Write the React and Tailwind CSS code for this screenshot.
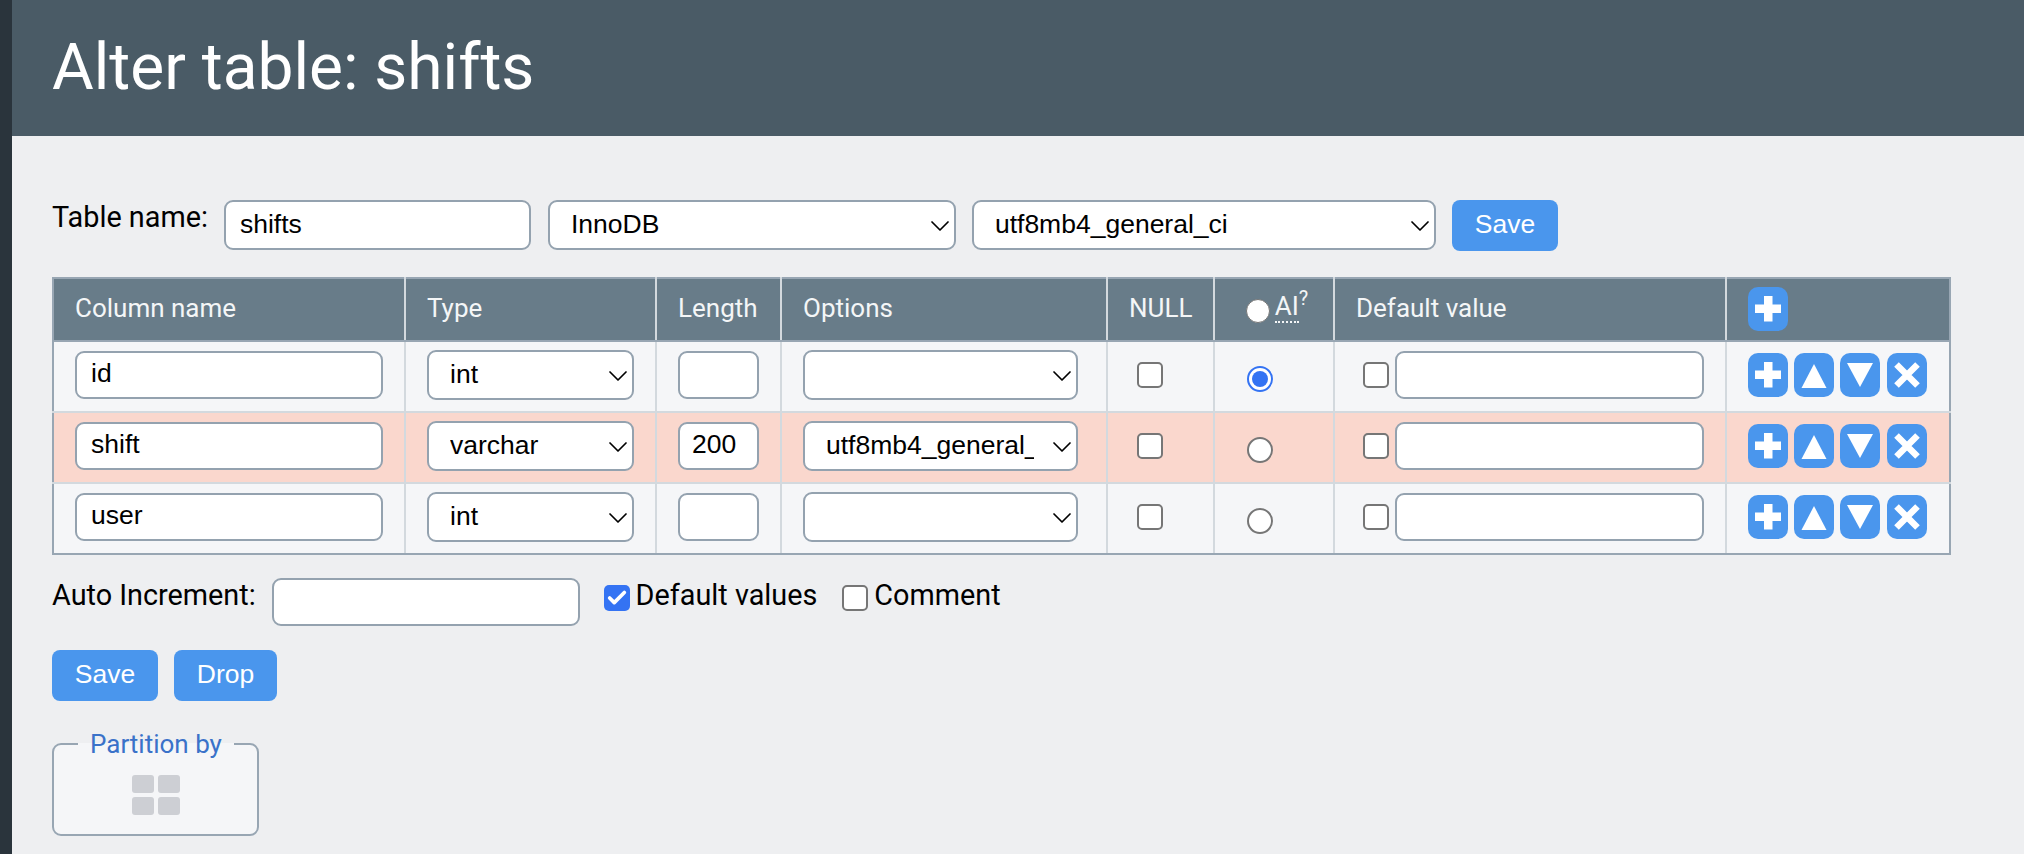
import { Check, ChevronDown } from 'lucide-react';

const rows = [
  { name: 'id', type: 'int', length: '', option: '', ai: true, bg: 'bg-[#f5f6f8]', h: 'h-[71px]' },
  { name: 'shift', type: 'varchar', length: '200', option: 'utf8mb4_general_ci', ai: false, bg: 'bg-[#fad7cd]', h: 'h-[71px]' },
  { name: 'user', type: 'int', length: '', option: '', ai: false, bg: 'bg-[#f5f6f8]', h: 'h-[71px]' },
];

const control = "h-[48px] rounded-[9px] border-2 border-[#94a2af] bg-white text-[26.5px] text-black outline-none font-['Liberation_Sans',sans-serif]";
const thClass = "h-[63px] border-2 border-[#98a6b3] border-x-[#d3d9de] bg-[#687c89] px-[21px] pb-[2px] text-left text-[26px] font-normal text-[#f4f6f7] first:border-l-[#98a6b3] last:border-r-[#98a6b3]";
const tdClass = "border-2 border-y-[#d3d9de] border-x-[#d3d9de] p-0 pb-[4px] pl-[21px] first:border-l-[#98a6b3] last:border-r-[#98a6b3]";
const checkboxClass = "block h-[26px] w-[26px] appearance-none rounded-[5px] border-2 border-[#767676] bg-white";
const radioClass = "block h-[26px] w-[26px] appearance-none rounded-full border-2 border-[#767676] bg-white";
const buttonClass = "h-[51px] rounded-[8px] bg-[#4a96ed] pb-[2px] text-[26.5px] text-white font-['Liberation_Sans',sans-serif]";
const labelClass = "text-[28.8px]";

function Select({ value, options, className }) {
  return (
    <div className={`relative shrink-0 ${className}`}>
      <select defaultValue={value} className={`${control} h-[50px] w-full appearance-none pl-[21px] pr-[42px]`}>
        {options.map((o) => <option key={o} value={o}>{o}</option>)}
      </select>
      <ChevronDown size={32} strokeWidth={1.3} className="pointer-events-none absolute right-0 top-[10px] text-black" />
    </div>
  );
}

function IconButton({ children, className = '' }) {
  return (
    <button className={`flex h-[44px] w-[40px] items-center justify-center rounded-[10px] bg-[#4a96ed] ${className}`}>
      <svg width="28" height="28" viewBox="0 0 28 28" fill="white">{children}</svg>
    </button>
  );
}

const Plus = () => <IconButton><path d="M10 1h8.500v8.500H27v8.500h-8.500V26.500H10V18H1V9.500h9z" /></IconButton>;
const Up = () => <IconButton><path d="M14 3 26.500 27H1.500z" /></IconButton>;
const Down = () => <IconButton><path d="M1 2h26L14 26z" /></IconButton>;
const Remove = () => <IconButton className="ml-[1px]"><path d="M3.500 3.500 24.500 24.500M24.500 3.500 3.500 24.500" stroke="white" strokeWidth="6.500" fill="none" /></IconButton>;

export default function App() {
  return (
    <div className="flex min-h-screen bg-[#eeeff1] font-['Roboto',sans-serif] text-black">
      <div className="w-[12px] shrink-0 bg-[#2a343c]" />
      <div className="min-w-0 flex-1">
        <h1 className="flex h-[136px] items-center bg-[#4a5b66] pl-[40px] text-[64px] font-normal text-white">Alter table: shifts</h1>

        <div className="pl-[40px] pt-[64px]">
          <div className="flex items-start">
            <span className={`${labelClass} mr-[16px] leading-[34px]`}>Table name:</span>
            <input defaultValue="shifts" className={`${control} h-[50px] w-[307px] px-[14px] pb-[2px]`} />
            <Select value="InnoDB" options={['InnoDB', 'MyISAM']} className="ml-[17px] w-[408px]" />
            <Select value="utf8mb4_general_ci" options={['utf8mb4_general_ci']} className="ml-[16px] w-[464px]" />
            <button className={`${buttonClass} ml-[16px] w-[106px]`}>Save</button>
          </div>

          <table className="mt-[26px] w-[1897px] table-fixed border-collapse">
            <colgroup>
              <col className="w-[352px]" />
              <col className="w-[251px]" />
              <col className="w-[125px]" />
              <col className="w-[326px]" />
              <col className="w-[107px]" />
              <col className="w-[120px]" />
              <col className="w-[392px]" />
              <col className="w-[224px]" />
            </colgroup>
            <thead>
              <tr>
                <th className={thClass}>Column name</th>
                <th className={thClass}>Type</th>
                <th className={thClass}>Length</th>
                <th className={thClass}>Options</th>
                <th className={thClass}>NULL</th>
                <th className={thClass}>
                  <span className="flex items-center justify-center gap-[5px] pl-[6px]">
                    <span className="mt-[4px] h-[24px] w-[24px] shrink-0 rounded-full border border-[#767676] bg-white" />
                    <span className="mt-[-4px]"><span className="border-b-2 border-dotted border-[#f4f6f7] leading-[26px]">AI</span><sup className="text-[20px]">?</sup></span>
                  </span>
                </th>
                <th className={thClass}>Default value</th>
                <th className={thClass}><Plus /></th>
              </tr>
            </thead>
            <tbody>
              {rows.map((r) => (
                <tr key={r.name} className={`${r.bg} ${r.h} [&:last-child>td]:border-b-[#98a6b3]`}>
                  <td className={tdClass}>
                    <input defaultValue={r.name} className={`${control} w-[308px] px-[14px] pb-[2px]`} />
                  </td>
                  <td className={tdClass}>
                    <Select value={r.type} options={['int', 'varchar']} className="w-[207px]" />
                  </td>
                  <td className={tdClass}>
                    <input defaultValue={r.length} className={`${control} w-[81px] px-[12px] pb-[2px]`} />
                  </td>
                  <td className={tdClass}>
                    <Select value={r.option} options={['', 'utf8mb4_general_ci']} className="w-[275px]" />
                  </td>
                  <td className={tdClass}>
                    <input type="checkbox" className={`${checkboxClass} ml-[8px]`} />
                  </td>
                  <td className={tdClass}>
                    {r.ai ? (
                      <span className="ml-[11px] flex h-[26px] w-[26px] translate-y-[4px] items-center justify-center rounded-full border-2 border-[#3473f3] bg-white">
                        <span className="h-[16px] w-[16px] rounded-full bg-[#3473f3]" />
                      </span>
                    ) : (
                      <input type="radio" name="ai" className={`${radioClass} ml-[11px] translate-y-[4px]`} />
                    )}
                  </td>
                  <td className={tdClass}>
                    <div className="flex items-center gap-[6px]">
                      <input type="checkbox" className={`${checkboxClass} ml-[7px]`} />
                      <input className={`${control} w-[309px]`} />
                    </div>
                  </td>
                  <td className={tdClass}>
                    <div className="flex gap-[6px]">
                      <Plus /><Up /><Down /><Remove />
                    </div>
                  </td>
                </tr>
              ))}
            </tbody>
          </table>

          <div className="mt-[23px] flex items-start">
            <span className={`${labelClass} mr-[16px] leading-[34px]`}>Auto Increment:</span>
            <input className={`${control} w-[308px]`} />
            <label className={`${labelClass} ml-[24px] mt-[7px] flex items-start gap-[6px] leading-[20px]`}>
              <span className="flex h-[26px] w-[26px] items-center justify-center rounded-[5px] bg-[#3473f3]">
                <Check size={22} strokeWidth={4} className="text-white" />
              </span>
              Default values
            </label>
            <label className={`${labelClass} ml-[25px] mt-[7px] flex items-start gap-[6px] leading-[20px]`}>
              <input type="checkbox" className={checkboxClass} />
              Comment
            </label>
          </div>

          <div className="mt-[24px] flex gap-[16px]">
            <button className={`${buttonClass} w-[106px]`}>Save</button>
            <button className={`${buttonClass} w-[103px]`}>Drop</button>
          </div>

          <fieldset className="mt-[29px] h-[106px] w-[207px] rounded-[9px] border-2 border-[#98a6b3] bg-[#f5f6f8] pl-[24px]">
            <legend className="px-[12px] text-[26px] leading-[28px] text-[#3a72c9]">Partition by</legend>
            <div className="ml-[54px] mt-[17px] grid w-[48px] grid-cols-2 gap-[4px]">
              <span className="h-[18px] w-[22px] rounded-[3px] bg-[#cdcfd4]" />
              <span className="h-[18px] w-[22px] rounded-[3px] bg-[#cdcfd4]" />
              <span className="h-[18px] w-[22px] rounded-[3px] bg-[#cdcfd4]" />
              <span className="h-[18px] w-[22px] rounded-[3px] bg-[#cdcfd4]" />
            </div>
          </fieldset>
        </div>
      </div>
    </div>
  );
}
